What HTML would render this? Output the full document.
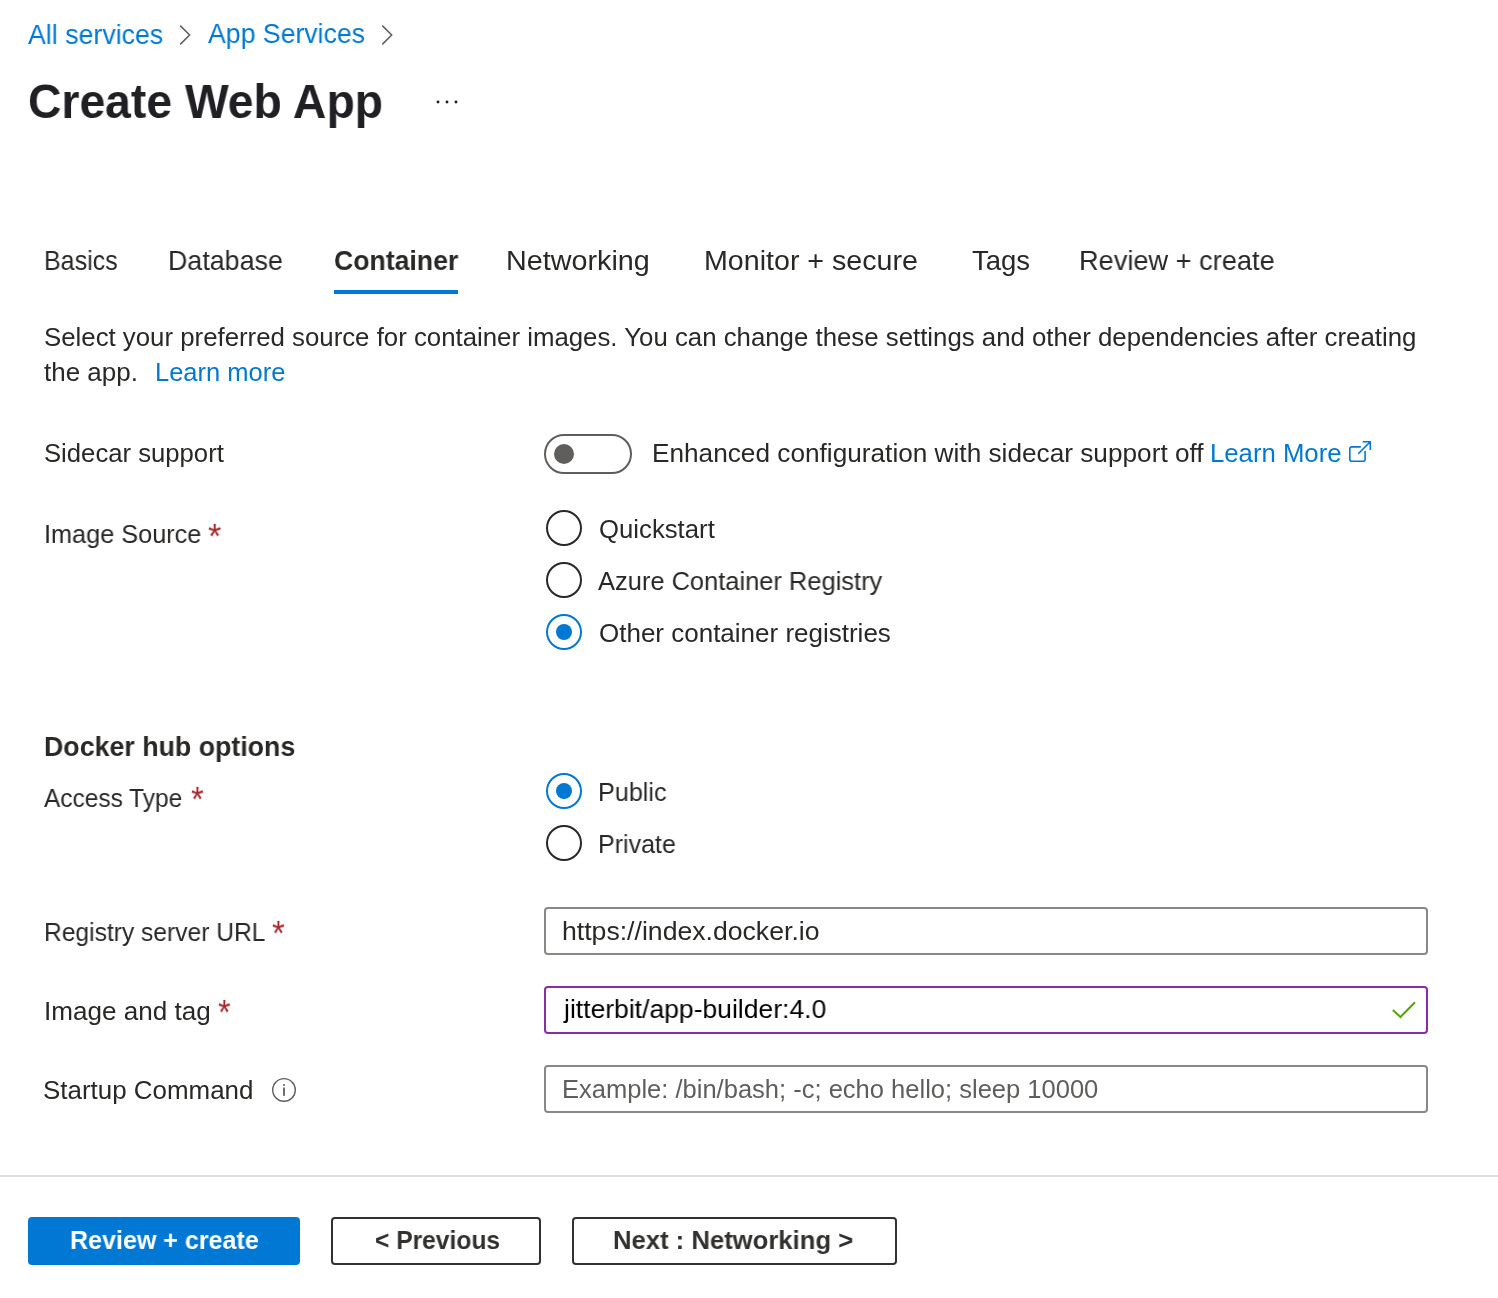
<!DOCTYPE html>
<html lang="en">
<head>
<meta charset="utf-8">
<title>Create Web App</title>
<style>
html,body{margin:0;padding:0;background:#fff;}
body{width:1498px;height:1298px;position:relative;overflow:hidden;
  font-family:"Liberation Sans",sans-serif;color:#292827;}
.t{will-change:transform;position:absolute;white-space:nowrap;line-height:1;margin:0;padding:0;font-weight:normal;transform-origin:0 0;}
svg.i{position:absolute;overflow:visible;}
.radio{position:absolute;left:546px;width:36px;height:36px;border:2px solid #292827;border-radius:50%;box-sizing:border-box;background:#fff;}
.radio.on{border-color:#0078d4;}
.radio.on::after{content:"";position:absolute;left:8px;top:8px;width:16px;height:16px;border-radius:50%;background:#0078d4;}
.inp{position:absolute;left:544px;width:884px;height:48px;box-sizing:border-box;border:2px solid #8a8886;border-radius:4px;background:#fff;}
.btn{position:absolute;top:1217px;height:48px;box-sizing:border-box;border-radius:4px;}
.btn.sec{border:2px solid #323130;background:#fff;}
</style>
</head>
<body>

<!-- breadcrumb -->
<nav>
<span class="t" id="bc1" style="left:28.09px;top:20.50px;font-size:27.5px;color:#0078d4;transform:scaleX(0.9722);">All services</span>
<svg class="i" id="ch1" style="left:176px;top:22px" width="20" height="26" viewBox="176 22 20 26"><path d="M180.2 25.6 L189.6 35 L180.2 44.4" fill="none" stroke="#605e5c" stroke-width="1.5"/></svg>
<span class="t" id="bc2" style="left:207.99px;top:20.40px;font-size:27.5px;color:#0078d4;transform:scaleX(0.9693);">App Services</span>
<svg class="i" id="ch2" style="left:378px;top:22px" width="20" height="26" viewBox="378 22 20 26"><path d="M382.3 25.6 L391.7 35 L382.3 44.4" fill="none" stroke="#605e5c" stroke-width="1.5"/></svg>
</nav>

<!-- title -->
<h1 class="t" id="title" style="left:27.88px;top:76.80px;font-size:48.5px;font-weight:bold;color:#1f1f24;transform:scaleX(0.9545);">Create Web App</h1>
<svg class="i" id="dots" style="left:430px;top:95px" width="34" height="14" viewBox="430 95 34 14"><circle cx="438" cy="102" r="1.45" fill="#201f1e"/><circle cx="447" cy="102" r="1.45" fill="#201f1e"/><circle cx="456" cy="102" r="1.45" fill="#201f1e"/></svg>

<!-- tabs -->
<span class="t" id="tab1" style="left:43.99px;top:246.70px;font-size:27.5px;color:#292827;transform:scaleX(0.9097);">Basics</span>
<span class="t" id="tab2" style="left:167.94px;top:246.70px;font-size:27.5px;color:#292827;transform:scaleX(0.9753);">Database</span>
<span class="t" id="tab3" style="left:333.61px;top:247.00px;font-size:28px;font-weight:bold;color:#292827;transform:scaleX(0.9513);">Container</span>
<div id="tabline" style="position:absolute;left:334px;top:290px;width:124px;height:4px;background:#0078d4;"></div>
<span class="t" id="tab4" style="left:506.28px;top:246.70px;font-size:27.5px;color:#292827;transform:scaleX(1.0452);">Networking</span>
<span class="t" id="tab5" style="left:703.99px;top:246.70px;font-size:27.5px;color:#292827;transform:scaleX(1.0406);">Monitor + secure</span>
<span class="t" id="tab6" style="left:971.95px;top:246.70px;font-size:27.5px;color:#292827;transform:scaleX(0.9931);">Tags</span>
<span class="t" id="tab7" style="left:1079.01px;top:246.70px;font-size:27.5px;color:#292827;transform:scaleX(0.9883);">Review + create</span>

<!-- description -->
<span class="t" id="p1" style="left:44.35px;top:324.70px;font-size:25.5px;color:#292827;transform:scaleX(1.0116);">Select your preferred source for container images. You can change these settings and other dependencies after creating</span>
<span class="t" id="p2" style="left:43.85px;top:359.70px;font-size:25.5px;color:#292827;transform:scaleX(1.0185);">the app.</span>
<span class="t" id="p3" style="left:154.61px;top:359.70px;font-size:25.5px;color:#0078d4;transform:scaleX(1.0001);">Learn more</span>

<!-- sidecar -->
<span class="t" id="l1" style="left:44.36px;top:440.80px;font-size:25.5px;color:#292827;transform:scaleX(1.0068);">Sidecar support</span>
<div id="toggle" style="position:absolute;left:544px;top:434px;width:88px;height:40px;box-sizing:border-box;border:2px solid #605e5c;border-radius:20px;background:#fff;"><div style="position:absolute;left:8px;top:8px;width:20px;height:20px;border-radius:50%;background:#605e5c;"></div></div>
<span class="t" id="s1" style="left:652.35px;top:440.70px;font-size:25.5px;color:#292827;transform:scaleX(1.0276);">Enhanced configuration with sidecar support off</span>
<span class="t" id="s2" style="left:1209.99px;top:440.70px;font-size:25.5px;color:#0078d4;transform:scaleX(1.0087);">Learn More</span>
<svg class="i" id="ext" style="left:1345px;top:436px" width="30" height="30" viewBox="1345 436 30 30"><path d="M1360.8 446.9 H1351.8 Q1349.8 446.9 1349.8 448.9 V459.2 Q1349.8 461.2 1351.8 461.2 H1363.1 Q1365.1 461.2 1365.1 459.2 V451" fill="none" stroke="#0078d4" stroke-width="1.6"/><path d="M1358.3 453.7 L1370.3 441.7 M1362.7 441.7 H1370.3 V449.9" fill="none" stroke="#0078d4" stroke-width="1.6"/></svg>

<!-- image source -->
<span class="t" id="l2" style="left:44.21px;top:522.30px;font-size:25.5px;color:#292827;transform:scaleX(0.9910);">Image Source</span>
<span class="t" id="a2" style="left:208.30px;top:519.56px;font-size:36px;color:#a4262c;transform:scale(0.9480,0.9568);">*</span>
<div class="radio" id="r1" style="top:510px;"></div>
<span class="t" id="o1" style="left:598.69px;top:516.80px;font-size:25.5px;color:#292827;transform:scaleX(1.0087);">Quickstart</span>
<div class="radio" id="r2" style="top:562px;"></div>
<span class="t" id="o2" style="left:598.18px;top:568.70px;font-size:25.5px;color:#292827;transform:scaleX(0.9979);">Azure Container Registry</span>
<div class="radio on" id="r3" style="top:614px;"></div>
<span class="t" id="o3" style="left:598.68px;top:620.60px;font-size:25.5px;color:#292827;transform:scaleX(1.0194);">Other container registries</span>

<!-- docker hub options -->
<span class="t" id="h2" style="left:44.05px;top:732.90px;font-size:27.5px;font-weight:bold;color:#292827;transform:scaleX(0.9731);">Docker hub options</span>
<span class="t" id="l3" style="left:44.40px;top:785.80px;font-size:25.5px;color:#292827;transform:scaleX(0.9589);">Access Type</span>
<span class="t" id="a3" style="left:190.83px;top:783.06px;font-size:36px;color:#a4262c;transform:scale(0.9085,0.9568);">*</span>
<div class="radio on" id="r4" style="top:773px;"></div>
<span class="t" id="o4" style="left:598.34px;top:779.70px;font-size:25.5px;color:#292827;transform:scaleX(0.9875);">Public</span>
<div class="radio" id="r5" style="top:825px;"></div>
<span class="t" id="o5" style="left:598.35px;top:831.50px;font-size:25.5px;color:#292827;transform:scaleX(0.9804);">Private</span>

<span class="t" id="l4" style="left:43.88px;top:919.90px;font-size:25.5px;color:#292827;transform:scaleX(0.9649);">Registry server URL</span>
<span class="t" id="a4" style="left:272.33px;top:917.16px;font-size:36px;color:#a4262c;transform:scale(0.9085,0.9568);">*</span>
<div class="inp" id="i1" style="top:907px;"></div>
<span class="t" id="v1" style="left:562.36px;top:919.30px;font-size:25.5px;color:#292827;transform:scaleX(1.0440);">https://index.docker.io</span>

<span class="t" id="l5" style="left:43.84px;top:998.70px;font-size:25.5px;color:#292827;transform:scaleX(1.0229);">Image and tag</span>
<span class="t" id="a5" style="left:217.64px;top:995.96px;font-size:36px;color:#a4262c;transform:scale(0.9006,0.9568);">*</span>
<div class="inp" id="i2" style="top:986px;border-color:#8a2da5;"></div>
<span class="t" id="v2" style="left:564.21px;top:996.40px;font-size:26.67px;color:#000;transform:scaleX(0.9943);">jitterbit/app-builder:4.0</span>
<svg class="i" id="chk" style="left:1388px;top:996px" width="32" height="28" viewBox="1388 996 32 28"><path d="M1392.8 1010 L1400.5 1017 L1415 1002.3" fill="none" stroke="#57a300" stroke-width="2"/></svg>

<span class="t" id="l6" style="left:43.34px;top:1078.30px;font-size:25.5px;color:#292827;transform:scaleX(1.0170);">Startup Command</span>
<svg class="i" id="info" style="left:270px;top:1076px" width="28" height="28" viewBox="270 1076 28 28"><circle cx="284" cy="1089.9" r="11.3" fill="none" stroke="#605e5c" stroke-width="1.4"/><rect x="283.1" y="1087.5" width="1.8" height="8.3" fill="#605e5c"/><rect x="283.1" y="1084.2" width="1.8" height="1.7" fill="#605e5c"/></svg>
<div class="inp" id="i3" style="top:1065px;"></div>
<span class="t" id="v3" style="left:562.01px;top:1077.00px;font-size:25.5px;color:#605e5c;transform:scaleX(1.0008);">Example: /bin/bash; -c; echo hello; sleep 10000</span>

<!-- footer -->
<div id="fline" style="position:absolute;left:0;top:1175px;width:1498px;height:2px;background:#e1dfdd;"></div>
<div class="btn" id="b1" style="left:28px;width:272px;background:#0078d4;"></div>
<span class="t" id="b1t" style="left:69.93px;top:1226.90px;font-size:26px;font-weight:bold;color:#fff;transform:scaleX(0.9635);">Review + create</span>
<div class="btn sec" id="b2" style="left:331px;width:210px;"></div>
<span class="t" id="b2t" style="left:374.87px;top:1227.00px;font-size:26px;font-weight:bold;color:#323130;transform:scaleX(0.9458);">&lt; Previous</span>
<div class="btn sec" id="b3" style="left:572px;width:325px;"></div>
<span class="t" id="b3t" style="left:613.49px;top:1227.00px;font-size:26px;font-weight:bold;color:#323130;transform:scaleX(0.9866);">Next : Networking &gt;</span>

</body>
</html>
